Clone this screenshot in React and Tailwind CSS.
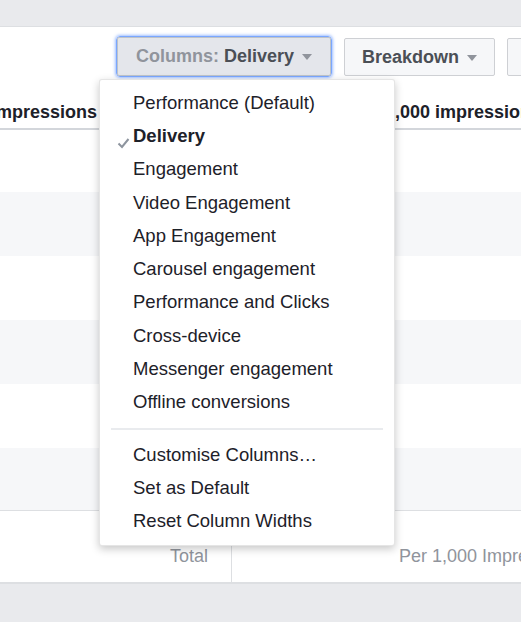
import React from 'react'

const menuItems = [
  'Performance (Default)',
  'Delivery',
  'Engagement',
  'Video Engagement',
  'App Engagement',
  'Carousel engagement',
  'Performance and Clicks',
  'Cross-device',
  'Messenger engagement',
  'Offline conversions',
]

const actions = ['Customise Columns…', 'Set as Default', 'Reset Column Widths']

const Caret = () => (
  <svg width="10" height="6" viewBox="0 0 10 6" className="ml-[8px] mt-[1px]">
    <path d="M0 0 L10 0 L5 6 Z" fill="#90949c" />
  </svg>
)

const Check = () => (
  <svg width="13" height="12" viewBox="0 0 13 12" className="absolute left-[-16px] top-[11px]">
    <path d="M1.5 6.5 L5 10 L11.5 2" fill="none" stroke="#8d949e" strokeWidth="2" />
  </svg>
)

const ColumnsMenu = ({ selected }) => {
  return (
    <div className="absolute left-[99px] top-[79px] w-[296px] h-[467px] bg-white rounded-[3px] border border-[#0000001a] shadow-[0_3px_9px_rgba(0,0,0,0.22)] pt-[6px]">
      {menuItems.map(item => (
        <div key={item} className="h-[33.3px] flex items-center pl-[33px] text-[18.5px] leading-[20px] text-[#1d2129]">
          <span className={`relative ${item === selected ? 'font-bold' : ''}`}>
            {item === selected && <Check />}
            {item}
          </span>
        </div>
      ))}
      <div className="mx-[11px] mt-[9px] mb-[8px] h-[2px] bg-[#e9ebee]" />
      {actions.map(item => (
        <div key={item} className="h-[33.3px] flex items-center pl-[33px] text-[18.5px] leading-[20px] text-[#1d2129]">
          {item}
        </div>
      ))}
    </div>
  )
}

const App = () => {
  const stripes = [
    { h: 'h-[62px]', bg: 'bg-white' },
    { h: 'h-[64px]', bg: 'bg-[#f6f7f9]' },
    { h: 'h-[64px]', bg: 'bg-white' },
    { h: 'h-[64px]', bg: 'bg-[#f6f7f9]' },
    { h: 'h-[64px]', bg: 'bg-white' },
    { h: 'h-[62px]', bg: 'bg-[#f6f7f9]' },
  ]

  return (
    <div className="relative w-[521px] h-[622px] overflow-hidden bg-[#e9eaed] font-['Liberation_Sans','Helvetica',sans-serif]">
      <div className="h-[27px] border-b border-[#dddfe2]" />

      <div className="bg-white">
        {/* toolbar */}
        <div className="h-[58px] flex items-start pt-[9px] pl-[116px] gap-[12px] overflow-hidden">
          <div className="shrink-0 rounded-[4px] border border-[#7aa7ff] shadow-[0_0_3px_1px_rgba(64,128,255,0.5)]">
            <div className="w-[214px] h-[39px] flex items-center justify-center rounded-[2px] border border-[#bec3c9] bg-[#e4e6eb] text-[18px] whitespace-nowrap">
              <span className="text-[#90949c] font-bold">Columns:&nbsp;</span>
              <span className="text-[#4b4f56] font-bold">Delivery</span>
              <Caret />
            </div>
          </div>
          <div className="shrink-0 mt-[2px] w-[151px] h-[38px] flex items-center justify-center rounded-[2px] border border-[#ced0d4] bg-[#f6f7f9] text-[18px] font-bold text-[#4b4f56]">
            Breakdown
            <Caret />
          </div>
          <div className="shrink-0 mt-[2px] w-[120px] h-[38px] rounded-[2px] border border-[#ced0d4] bg-[#f6f7f9]" />
        </div>

        {/* column headers */}
        <div className="h-[45px] flex items-end pb-[6px] border-b-2 border-[#d3d6db] text-[18px] leading-[20px] font-bold text-[#1d2129] whitespace-nowrap overflow-hidden">
          <div className="w-[97px] shrink-0 flex justify-end overflow-hidden">Impressions</div>
          <div className="pl-[210px]">Cost per 1,000 impressions</div>
        </div>

        {stripes.map((row, i) => (
          <div key={i} className={`${row.h} ${row.bg}`} />
        ))}

        {/* totals */}
        <div className="h-[74px] flex border-t border-b-2 border-[#dddfe2] text-[18px] leading-[20px] text-[#90949c] whitespace-nowrap overflow-hidden">
          <div className="w-[232px] shrink-0 flex items-end justify-end pr-[23px] pb-[16px] border-r border-[#dddfe2]">
            Total
          </div>
          <div className="flex items-end pl-[167px] pb-[16px]">Per 1,000 Impressions</div>
        </div>
      </div>

      <ColumnsMenu selected="Delivery" />
    </div>
  )
}

export default App
